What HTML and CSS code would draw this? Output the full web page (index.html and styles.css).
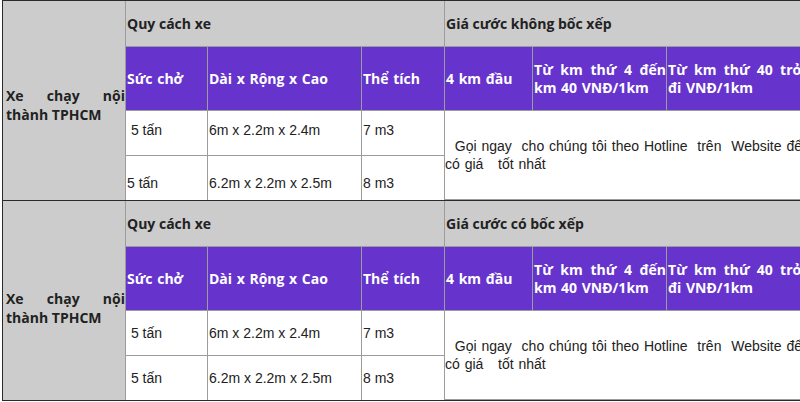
FILE: index.html
```html
<!DOCTYPE html>
<html lang="vi">
<head>
<meta charset="utf-8">
<title>Bảng giá</title>
<link rel="stylesheet" href="styles.css">
</head>
<body>
<div class="wrap">
  <table class="price first">
    <colgroup>
      <col class="c1"><col class="c2"><col class="c3"><col class="c4"><col class="c5"><col class="c6"><col class="c7">
    </colgroup>
    <tr class="r-head">
      <td class="side" rowspan="4">Xe chạy nội thành TPHCM</td>
      <td class="gray" colspan="3">Quy cách xe</td>
      <td class="gray" colspan="3">Giá cước không bốc xếp</td>
    </tr>
    <tr class="r-sub">
      <td class="purple">Sức chở</td>
      <td class="purple">Dài x Rộng x Cao</td>
      <td class="purple">Thể tích</td>
      <td class="purple">4 km đầu</td>
      <td class="purple">Từ km thứ 4 đến km 40 VNĐ/1km</td>
      <td class="purple">Từ km thứ 40 trở đi VNĐ/1km</td>
    </tr>
    <tr class="r-data">
      <td class="up">&nbsp;5 tấn</td>
      <td class="up">6m x 2.2m x 2.4m</td>
      <td class="up">7 m3</td>
      <td class="note" rowspan="2" colspan="3">&nbsp; Gọi ngay&nbsp; cho chúng tôi theo Hotline&nbsp; trên&nbsp; Website để có giá&nbsp;&nbsp; tốt nhất</td>
    </tr>
    <tr class="r-last">
      <td class="down">5 tấn</td>
      <td class="down">6.2m x 2.2m x 2.5m</td>
      <td class="down">8 m3</td>
    </tr>
  </table>
  <table class="price second">
    <colgroup>
      <col class="c1"><col class="c2"><col class="c3"><col class="c4"><col class="c5"><col class="c6"><col class="c7">
    </colgroup>
    <tr class="r-head">
      <td class="side side2" rowspan="4">Xe chạy nội thành TPHCM</td>
      <td class="gray" colspan="3">Quy cách xe</td>
      <td class="gray" colspan="3">Giá cước có bốc xếp</td>
    </tr>
    <tr class="r-sub">
      <td class="purple">Sức chở</td>
      <td class="purple">Dài x Rộng x Cao</td>
      <td class="purple">Thể tích</td>
      <td class="purple">4 km đầu</td>
      <td class="purple">Từ km thứ 4 đến km 40 VNĐ/1km</td>
      <td class="purple">Từ km thứ 40 trở đi VNĐ/1km</td>
    </tr>
    <tr class="r-data">
      <td>&nbsp;5 tấn</td>
      <td>6m x 2.2m x 2.4m</td>
      <td>7 m3</td>
      <td class="note" rowspan="2" colspan="3">&nbsp; Gọi ngay&nbsp; cho chúng tôi theo Hotline&nbsp; trên&nbsp; Website để có giá&nbsp;&nbsp; tốt nhất</td>
    </tr>
    <tr class="r-last">
      <td>&nbsp;5 tấn</td>
      <td>6.2m x 2.2m x 2.5m</td>
      <td>8 m3</td>
    </tr>
  </table>
</div>
</body>
</html>
```

FILE: styles.css
```css
html, body {
  margin: 0;
  padding: 0;
  background: #ffffff;
  overflow: hidden;
}

.wrap {
  padding-left: 2px;
  width: 820px;
}

.price {
  border-collapse: separate;
  border-spacing: 0;
  table-layout: fixed;
  width: 801px;
  border-left: 1px solid #2b2b2b;
  border-top: 1px solid #2b2b2b;
}

.price.second {
  border-bottom: 1px solid #2b2b2b;
}

.c1 { width: 123px; }
.c2 { width: 82px; }
.c3 { width: 154px; }
.c4 { width: 83px; }
.c5 { width: 88px; }
.c6 { width: 134px; }
.c7 { width: 136px; }

.price td {
  border-right: 1px solid #9c9c9c;
  border-bottom: 1px solid #9c9c9c;
  padding: 0 0 0 1px;
  vertical-align: middle;
  font-family: "Liberation Sans", Arial, sans-serif;
  font-size: 14px;
  line-height: 18px;
  color: #222222;
  overflow: hidden;
}

.price .r-last td {
  border-bottom: none;
}

.price td.side {
  border-bottom: none;
  background: #cccccc;
  font-family: "Open Sans", sans-serif;
  font-weight: 700;
  text-align: justify;
  line-height: 19px;
  padding: 8px 0 0 3px;
}

.price td.side2 {
  padding-top: 14px;
}

.r-head { height: 46px; }
.r-sub { height: 64px; }
.r-data { height: 45px; }
.r-last { height: 44px; }

.price td.gray {
  background: #cccccc;
  font-family: "Open Sans", sans-serif;
  font-weight: 700;
  padding-left: 1px;
}

.price td.purple {
  background: #6633cc;
  color: #ffffff;
  font-family: "Open Sans", sans-serif;
  font-weight: 700;
  text-align: justify;
  line-height: 18px;
  word-spacing: 1px;
  padding: 0 0 0 1px;
}

.price td.up {
  padding-bottom: 6px;
}

.price td.down {
  padding-top: 9px;
}

.price td.note {
  padding-left: 0;
  word-spacing: 1px;
}
```
